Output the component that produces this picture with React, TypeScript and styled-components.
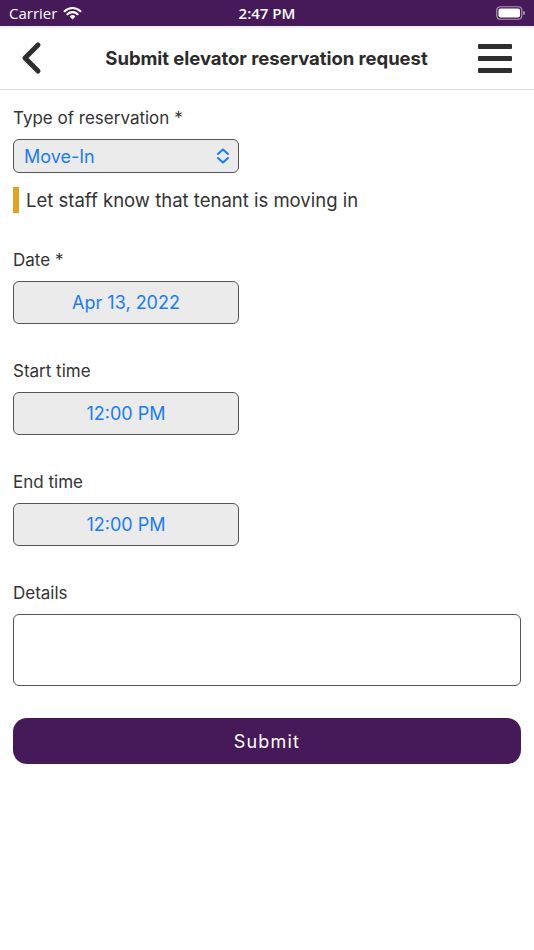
import React from "react";
import styled, { createGlobalStyle } from "styled-components";

const Global = createGlobalStyle`
  html, body { margin: 0; padding: 0; background: #fff; }
  body { font-family: Inter, "Open Sans", sans-serif; -webkit-font-smoothing: antialiased; }
  * { box-sizing: border-box; }
`;

const Screen = styled.div`
  width: 534px;
  height: 950px;
  display: flex;
  flex-direction: column;
  background: #fff;
`;

const StatusBar = styled.div`
  height: 26px;
  background: #461a59;
  color: #fff;
  display: grid;
  grid-template-columns: 1fr auto 1fr;
  align-items: center;
  padding: 0 9px;
  font-family: "Open Sans", Inter, sans-serif;
  font-size: 15px;
`;

const StatusLeft = styled.div`
  display: flex;
  align-items: center;
  gap: 6px;
`;

const StatusTime = styled.div`
  font-weight: 600;
  font-size: 15px;
`;

const StatusRight = styled.div`
  display: flex;
  justify-content: flex-end;
  align-items: center;
`;

const Header = styled.div`
  height: 64px;
  display: grid;
  grid-template-columns: 1fr auto 1fr;
  align-items: center;
  padding: 0 21px 0 20px;
  border-bottom: 1px solid #dedede;
  box-shadow: inset 0 4px 4px -3px rgba(0, 0, 0, 0.12);
`;

const Title = styled.div`
  font-family: Inter, sans-serif;
  font-weight: 700;
  font-size: 18.5px;
  color: #2b2b2b;
  letter-spacing: -0.05px;
`;

const IconBtn = styled.div<{ $end?: boolean }>`
  display: flex;
  align-items: center;
  justify-content: ${(p) => (p.$end ? "flex-end" : "flex-start")};
`;

const Form = styled.div`
  display: flex;
  flex-direction: column;
  padding: 0 13px;
`;

const Field = styled.div<{ $top: number }>`
  display: flex;
  flex-direction: column;
  margin-top: ${(p) => p.$top}px;
`;

const Label = styled.div`
  font-size: 17px;
  color: #333;
  line-height: 22px;
  margin-bottom: 10px;
`;

const Select = styled.div`
  width: 226px;
  height: 34px;
  border: 1.5px solid #555;
  border-radius: 6px;
  background: #ebebeb;
  display: flex;
  align-items: center;
  justify-content: space-between;
  padding: 0 8px 0 10px;
  color: #1a7cf5;
  font-size: 18px;
`;

const PickerBox = styled.div`
  width: 226px;
  height: 43px;
  border: 1.5px solid #555;
  border-radius: 6px;
  background: #ebebeb;
  display: flex;
  align-items: center;
  justify-content: center;
  color: #1a7cf5;
  font-size: 18px;
`;

const Hint = styled.div`
  display: flex;
  align-items: center;
  gap: 7px;
  margin-top: 14px;
  font-size: 18.5px;
  color: #333;
`;

const HintBar = styled.div`
  width: 6px;
  height: 26px;
  background: #e0a425;
`;

const TextArea = styled.div`
  height: 72px;
  border: 1.5px solid #555;
  border-radius: 6px;
  background: #fff;
`;

const SubmitButton = styled.button`
  margin-top: 32px;
  height: 46px;
  border: none;
  border-radius: 14px;
  background: #461a59;
  color: #fff;
  font-family: Inter, sans-serif;
  font-size: 18px;
  font-weight: 400;
  letter-spacing: 1.2px;
`;

export default function App() {
  return (
    <Screen>
      <Global />
      <StatusBar>
        <StatusLeft>
          <span>Carrier</span>
          <svg width="19" height="14" viewBox="0 0 19 14">
            <path d="M9.5 13.5 L6.6 10.4 A4.2 4.2 0 0 1 12.4 10.4 Z" fill="#fff" />
            <path d="M4.4 8.2 A7.3 7.3 0 0 1 14.6 8.2" stroke="#fff" strokeWidth="2.2" fill="none" strokeLinecap="round" />
            <path d="M1.6 5.2 A11.3 11.3 0 0 1 17.4 5.2" stroke="#fff" strokeWidth="2.2" fill="none" strokeLinecap="round" />
          </svg>
        </StatusLeft>
        <StatusTime>2:47 PM</StatusTime>
        <StatusRight>
          <svg width="29" height="14" viewBox="0 0 29 14">
            <rect x="0.75" y="0.75" width="25" height="12.5" rx="3.5" stroke="rgba(255,255,255,0.55)" strokeWidth="1.2" fill="none" />
            <rect x="2.5" y="2.5" width="21.5" height="9" rx="2" fill="#fff" />
            <path d="M27.2 5 v4 a2 2 0 0 0 0 -4z" fill="rgba(255,255,255,0.55)" />
          </svg>
        </StatusRight>
      </StatusBar>
      <Header>
        <IconBtn>
          <svg width="24" height="34" viewBox="0 0 24 34">
            <path d="M18 4 L5 17 L18 30" stroke="#2e2e2e" strokeWidth="5" fill="none" strokeLinecap="round" strokeLinejoin="round" />
          </svg>
        </IconBtn>
        <Title>Submit elevator reservation request</Title>
        <IconBtn $end>
          <svg width="36" height="32" viewBox="0 0 36 32">
            <rect x="1" y="2" width="34" height="5" rx="1" fill="#2e2e2e" />
            <rect x="1" y="14" width="34" height="5" rx="1" fill="#2e2e2e" />
            <rect x="1" y="26" width="34" height="5" rx="1" fill="#2e2e2e" />
          </svg>
        </IconBtn>
      </Header>
      <Form>
        <Field $top={17}>
          <Label>Type of reservation *</Label>
          <Select>
            <span>Move-In</span>
            <svg width="14" height="18" viewBox="0 0 14 18">
              <path d="M2 7 L7 2.5 L12 7" stroke="#1a7cf5" strokeWidth="2" fill="none" strokeLinecap="round" strokeLinejoin="round" />
              <path d="M2 11 L7 15.5 L12 11" stroke="#1a7cf5" strokeWidth="2" fill="none" strokeLinecap="round" strokeLinejoin="round" />
            </svg>
          </Select>
          <Hint>
            <HintBar />
            <span>Let staff know that tenant is moving in</span>
          </Hint>
        </Field>
        <Field $top={36}>
          <Label>Date *</Label>
          <PickerBox>Apr 13, 2022</PickerBox>
        </Field>
        <Field $top={36}>
          <Label>Start time</Label>
          <PickerBox>12:00 PM</PickerBox>
        </Field>
        <Field $top={36}>
          <Label>End time</Label>
          <PickerBox>12:00 PM</PickerBox>
        </Field>
        <Field $top={36}>
          <Label>Details</Label>
          <TextArea />
        </Field>
        <SubmitButton>Submit</SubmitButton>
      </Form>
    </Screen>
  );
}
